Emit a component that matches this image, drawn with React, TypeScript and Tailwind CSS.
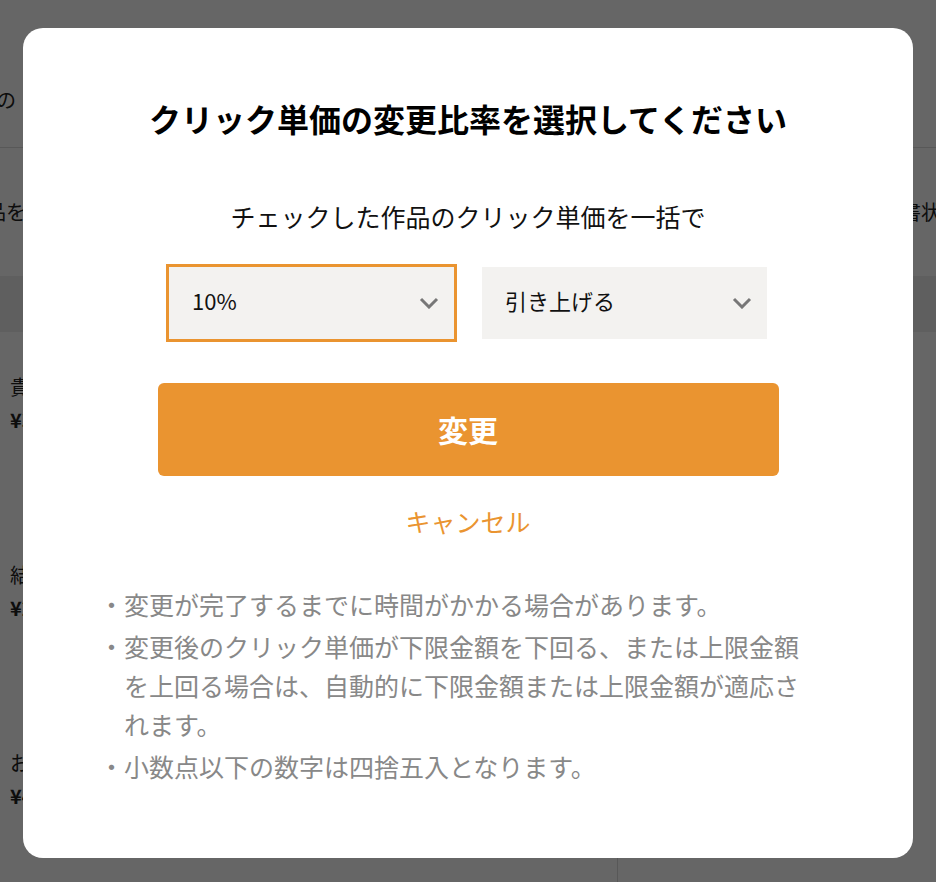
import React from "react";

const Chevron = () => (
    <svg width="20" height="12" viewBox="0 0 20 12" fill="none" className="shrink-0">
        <path d="M2 2L10 10L18 2" stroke="#777" strokeWidth="3"/>
    </svg>
);

const rows = [
    {name: "貴方だけの物語", price: "¥30"},
    {name: "結ばれた約束", price: "¥25"},
    {name: "おかえりの季節", price: "¥40"},
];

const notes = [
    "・変更が完了するまでに時間がかかる場合があります。",
    "・変更後のクリック単価が下限金額を下回る、または上限金額を上回る場合は、自動的に下限金額または上限金額が適応されます。",
    "・小数点以下の数字は四捨五入となります。",
];

export default function App() {
    return (
        <div className="font-['Noto_Sans_CJK_JP','Noto_Sans',sans-serif]">
            {/* page behind the dialog */}
            <div className="h-screen overflow-hidden bg-white text-[#222]">
                <div className="h-[148px] border-b border-[#ddd] flex items-center pt-[52px]">
                    <p className="text-[20px] -ml-[4px] whitespace-nowrap">の</p>
                </div>
                <div className="h-[128px] flex items-center justify-between">
                    <p className="text-[20px] -ml-[34px] whitespace-nowrap">作品を選択</p>
                    <p className="text-[20px] -mr-[25px] whitespace-nowrap">書状況</p>
                </div>
                <div className="h-[56px] bg-[#eee]"/>
                <div className="grid grid-cols-[617px_1fr]">
                    {rows.map((r) => (
                        <React.Fragment key={r.name}>
                            <div className="h-[188px] pl-[10px] pt-[40px]">
                                <p className="text-[20px] leading-[30px]">{r.name}</p>
                                <p className="text-[20px] leading-[30px] mt-[3px] font-bold">{r.price}</p>
                            </div>
                            <div className="h-[188px] border-l border-[#ddd]"/>
                        </React.Fragment>
                    ))}
                </div>
            </div>

            {/* overlay + dialog */}
            <div className="fixed inset-0 bg-black/60 flex justify-center pt-[28px]">
                <div className="w-[890px] h-[830px] bg-white rounded-[20px] flex flex-col items-center">
                    <h2 className="pt-[66px] text-[32px] leading-[48px] font-bold text-black">
                        クリック単価の変更比率を選択してください
                    </h2>
                    <p className="mt-[56px] text-[25px] leading-[36px] text-[#111]">
                        チェックした作品のクリック単価を一括で
                    </p>
                    <div className="mt-[33px] flex gap-[28px]">
                        <div className="w-[285px] h-[72px] bg-[#f3f2f0] ring-[3px] ring-[#ea9430] flex items-center justify-between pl-[23px] pr-[15px]">
                            <span className="text-[22px] text-[#111] mb-[6px]">10%</span>
                            <Chevron/>
                        </div>
                        <div className="w-[285px] h-[72px] bg-[#f3f2f0] flex items-center justify-between pl-[23px] pr-[15px]">
                            <span className="text-[22px] text-[#111] mb-[6px]">引き上げる</span>
                            <Chevron/>
                        </div>
                    </div>
                    <button className="mt-[44px] w-[621px] h-[93px] rounded-[6px] bg-[#ea9430] text-white text-[30px] font-bold flex items-center justify-center">
                        変更
                    </button>
                    <button className="mt-[27px] text-[25px] leading-[36px] text-[#ea9430]">
                        キャンセル
                    </button>
                    <ul className="self-start ml-[76px] w-[714px] mt-[46px] text-[25px] leading-[39px] text-[#888] space-y-[3px]">
                        {notes.map((n) => (
                            <li key={n} className="pl-[25px] -indent-[25px]">{n}</li>
                        ))}
                    </ul>
                </div>
            </div>
        </div>
    );
}
